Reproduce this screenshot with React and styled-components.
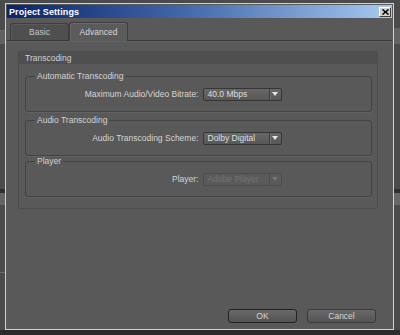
import React from "react";
import styled, { createGlobalStyle } from "styled-components";

const GlobalStyle = createGlobalStyle`
  html, body {
    margin: 0;
    padding: 0;
    background: #474747;
  }
  * {
    box-sizing: border-box;
  }
`;

// app window behind the dialog: only thin strips of it show at the edges
const Page = styled.div`
  width: 400px;
  height: 335px;
  overflow: hidden;
  display: flex;
  padding: 3px 6px 5px 5px;
  font-family: "Liberation Sans", Arial, sans-serif;
  background:
    linear-gradient(#2c2c2c, #2c2c2c) 0 330px / 400px 5px no-repeat,
    linear-gradient(#111, #111) 147px 331px / 253px 2px no-repeat,
    linear-gradient(#6a6a6a, #6a6a6a) 0 30px / 5px 1px no-repeat,
    linear-gradient(#616161, #616161) 0 31px / 5px 13px no-repeat,
    linear-gradient(#2f2f2f, #2f2f2f) 0 189px / 5px 4px no-repeat,
    linear-gradient(#646464, #646464) 0 193px / 5px 12px no-repeat,
    linear-gradient(#6a6a6a, #6a6a6a) 0 272px / 5px 1px no-repeat,
    linear-gradient(#626262, #626262) 394px 28px / 6px 16px no-repeat,
    linear-gradient(#2f2f2f, #2f2f2f) 394px 189px / 6px 4px no-repeat,
    linear-gradient(#666, #666) 394px 193px / 6px 12px no-repeat,
    #4b4b4b;
`;

const Dialog = styled.div`
  flex: 1;
  display: flex;
  flex-direction: column;
  border: 1px solid #d2d2d2;
  padding: 1px;
  background: #595959;
`;

const TitleBar = styled.div`
  height: 13px;
  display: flex;
  align-items: center;
  justify-content: space-between;
  padding: 0 1px 0 2px;
  background: linear-gradient(90deg, #0a246a 0%, #4266a8 45%, #a6caf0 100%);
`;

const TitleText = styled.span`
  color: #fff;
  font-weight: bold;
  font-size: 9px;
  letter-spacing: 0.1px;
`;

const CloseButton = styled.div`
  width: 12px;
  height: 10px;
  background: #d4d0c8;
  border: 1px solid;
  border-color: #fff #404040 #404040 #fff;
  display: flex;
  align-items: center;
  justify-content: center;
`;

const TabBar = styled.div`
  display: flex;
  align-items: flex-end;
  height: 23px;
  padding-left: 3px;
  border-bottom: 1px solid #393939;
  box-shadow: 0 1px 0 #626262;
`;

const Tab = styled.div`
  height: ${(p) => (p.$active ? 19 : 17)}px;
  width: 59px;
  display: flex;
  align-items: center;
  justify-content: center;
  font-size: 8.5px;
  color: ${(p) => (p.$active ? "#d6d6d6" : "#c4c4c4")};
  background: ${(p) => (p.$active ? "#5b5b5b" : "#4f4f4f")};
  border: 1px solid #3e3e3e;
  border-bottom: none;
  border-radius: 3px 3px 0 0;
  box-shadow: inset 1px 1px 0 ${(p) => (p.$active ? "#6a6a6a" : "#5a5a5a")};
  margin-bottom: ${(p) => (p.$active ? -1 : 0)}px;
`;

const Content = styled.div`
  flex: 1;
  display: flex;
  flex-direction: column;
  padding: 10px 14px 5px 11px;
`;

const Group = styled.div`
  border: 1px solid #4d4d4d;
  border-radius: 2px;
  padding-bottom: 11px;
`;

const GroupHeader = styled.div`
  height: 12px;
  line-height: 12px;
  padding-left: 6px;
  font-size: 8.5px;
  color: #d2d2d2;
  background: #4f4f4f;
`;

const GroupBody = styled.div`
  display: flex;
  flex-direction: column;
  padding: 0 5px 0 6px;
`;

const Fieldset = styled.fieldset`
  margin: ${(p) => p.$top}px 0 0 0;
  padding: 6px 8px 10px;
  border: 1px solid #434343;
  border-radius: 3px;
  box-shadow: 0 1px 0 #626262;
`;

const Legend = styled.legend`
  padding: 0 2px;
  margin-left: 1px;
  font-size: 8.5px;
  line-height: 10px;
  color: #d2d2d2;
`;

const Row = styled.div`
  display: grid;
  grid-template-columns: 1fr 1fr;
  align-items: center;
  height: 14px;
`;

const Label = styled.span`
  text-align: right;
  font-size: 8.5px;
  color: #d4d4d4;
`;

const Select = styled.div`
  width: 79px;
  height: 13px;
  margin-left: 4px;
  display: flex;
  align-items: stretch;
  border: 1px solid ${(p) => (p.$disabled ? "#4c4c4c" : "#353535")};
  border-radius: 2px;
  background: ${(p) =>
    p.$disabled ? "#5a5a5a" : "linear-gradient(#686868, #575757)"};
  font-size: 8.5px;
  color: ${(p) => (p.$disabled ? "#737373" : "#dedede")};
`;

const SelectText = styled.span`
  flex: 1;
  padding-left: 4px;
  line-height: 11px;
  white-space: nowrap;
`;

const SelectArrow = styled.span`
  width: 12px;
  display: flex;
  align-items: center;
  justify-content: center;
  border-left: 1px solid ${(p) => (p.$disabled ? "#4c4c4c" : "#3c3c3c")};
  box-shadow: inset 1px 0 0 ${(p) => (p.$disabled ? "#5a5a5a" : "#727272")};
`;

const Footer = styled.div`
  margin-top: auto;
  display: flex;
  justify-content: flex-end;
  gap: 10px;
  padding-right: 2px;
`;

const Button = styled.div`
  width: 69px;
  height: 14px;
  display: flex;
  align-items: center;
  justify-content: center;
  font-size: 8.5px;
  color: #d4d4d4;
  background: linear-gradient(#696969, #545454);
  border: 1px solid ${(p) => (p.$default ? "#222" : "#3a3a3a")};
  border-radius: 3px;
`;

function Arrow({ disabled }) {
  return (
    <svg width="6" height="4" viewBox="0 0 6 4">
      <path d="M0 0H6L3 4Z" fill={disabled ? "#777" : "#e6e6e6"} />
    </svg>
  );
}

function Dropdown({ value, disabled }) {
  return (
    <Select $disabled={disabled}>
      <SelectText>{value}</SelectText>
      <SelectArrow $disabled={disabled}>
        <Arrow disabled={disabled} />
      </SelectArrow>
    </Select>
  );
}

function Setting({ title, label, value, disabled, top }) {
  return (
    <Fieldset $top={top}>
      <Legend>{title}</Legend>
      <Row>
        <Label>{label}</Label>
        <Dropdown value={value} disabled={disabled} />
      </Row>
    </Fieldset>
  );
}

export default function App() {
  return (
    <>
      <GlobalStyle />
      <Page>
        <Dialog>
          <TitleBar>
            <TitleText>Project Settings</TitleText>
            <CloseButton>
              <svg width="7" height="6" viewBox="0 0 7 6">
                <path d="M0.5 0.5L6.5 5.5M6.5 0.5L0.5 5.5" stroke="#000" strokeWidth="1.5" />
              </svg>
            </CloseButton>
          </TitleBar>
          <TabBar>
            <Tab>Basic</Tab>
            <Tab $active>Advanced</Tab>
          </TabBar>
          <Content>
            <Group>
              <GroupHeader>Transcoding</GroupHeader>
              <GroupBody>
                <Setting
                  top={7}
                  title="Automatic Transcoding"
                  label="Maximum Audio/Video Bitrate:"
                  value="40.0 Mbps"
                />
                <Setting
                  top={3}
                  title="Audio Transcoding"
                  label="Audio Transcoding Scheme:"
                  value="Dolby Digital"
                />
                <Setting
                  top={0}
                  title="Player"
                  label="Player:"
                  value="Adobe Player"
                  disabled
                />
              </GroupBody>
            </Group>
            <Footer>
              <Button $default>OK</Button>
              <Button>Cancel</Button>
            </Footer>
          </Content>
        </Dialog>
      </Page>
    </>
  );
}
